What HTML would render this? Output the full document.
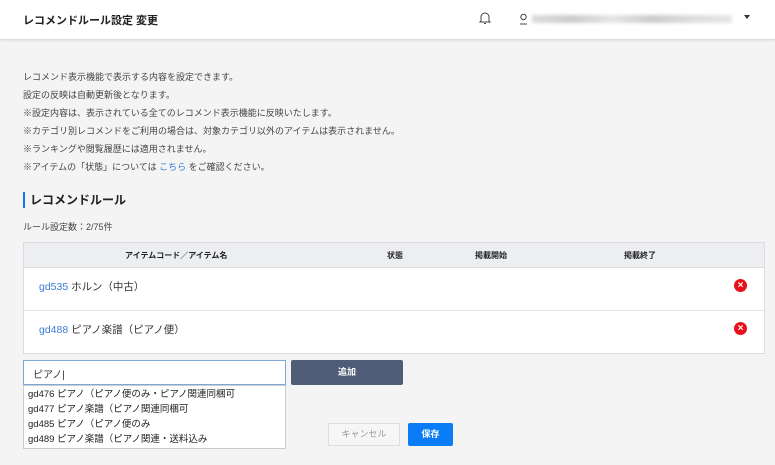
<!DOCTYPE html>
<html><head><meta charset="utf-8"><style>
*{margin:0;padding:0;box-sizing:border-box}
body{width:775px;height:465px;background:#f4f4f4;font-family:"Liberation Sans","Noto Sans CJK JP",sans-serif;color:#333;position:relative;overflow:hidden}
.hd{position:absolute;left:0;top:0;width:775px;height:40px;background:#fff;border-bottom:1px solid #ddd;box-shadow:0 1px 2px rgba(0,0,0,.08)}
.abs{position:absolute;white-space:nowrap}
.t{font-size:9px;color:#444}
.blur{position:absolute;left:532px;top:15px;width:200px;height:8px;background:linear-gradient(90deg,#ddd,#ccc 20%,#e6e6e6 40%,#ccc 60%,#ddd 80%,#e6e6e6);filter:blur(1.5px)}
.tbl{position:absolute;left:23px;top:242px;width:742px;height:112px;border:1px solid #ddd;background:#fff}
.th{height:25px;background:#eceef1;border-bottom:1px solid #ddd;position:relative;font-size:8px;font-weight:bold;color:#222}
.row{height:43px;border-bottom:1px solid #e3e3e3;position:relative;font-size:10.5px}
.row a{color:#3a7bd5}
.x{position:absolute;left:710px;top:11px;width:13px;height:13px;border-radius:50%;background:#e8101a;color:#fff;font-size:10px;font-weight:bold;text-align:center;line-height:13px}
</style></head><body>
<div class="hd">
<div class="abs" style="left:23px;top:12px;font-size:11px;font-weight:bold;color:#222">レコメンドルール設定 変更</div>
<svg class="abs" style="left:479px;top:11px" width="12" height="14" viewBox="0 0 12 14"><path d="M2 10V6a4 4 0 0 1 8 0v4l1 1H1z M5 12.5h2" fill="none" stroke="#444" stroke-width="1"/></svg>
<svg class="abs" style="left:519px;top:13px" width="9" height="12" viewBox="0 0 9 12"><circle cx="4.5" cy="4" r="2.7" fill="none" stroke="#444"/><path d="M1 11h7" stroke="#444"/></svg>
<div class="blur"></div>
<div class="abs" style="left:744px;top:15px;width:0;height:0;border-left:3.5px solid transparent;border-right:3.5px solid transparent;border-top:4px solid #333"></div>
</div>
<div class="abs t" style="left:23px;top:70px">レコメンド表示機能で表示する内容を設定できます。</div>
<div class="abs t" style="left:23px;top:88px">設定の反映は自動更新後となります。</div>
<div class="abs t" style="left:23px;top:106px">※設定内容は、表示されている全てのレコメンド表示機能に反映いたします。</div>
<div class="abs t" style="left:23px;top:124px">※カテゴリ別レコメンドをご利用の場合は、対象カテゴリ以外のアイテムは表示されません。</div>
<div class="abs t" style="left:23px;top:142px">※ランキングや閲覧履歴には適用されません。</div>
<div class="abs t" style="left:23px;top:160px">※アイテムの「状態」については <span style="color:#3a7bd5">こちら</span> をご確認ください。</div>
<div class="abs" style="left:23px;top:192px;width:2px;height:16px;background:#1a73e8"></div>
<div class="abs" style="left:30px;top:191px;font-size:12px;font-weight:bold;color:#222">レコメンドルール</div>
<div class="abs t" style="left:23px;top:220px">ルール設定数：2/75件</div>
<div class="tbl">
<div class="th"><span class="abs" style="left:101px;top:7px">アイテムコード／アイテム名</span><span class="abs" style="left:363px;top:7px">状態</span><span class="abs" style="left:451px;top:7px">掲載開始</span><span class="abs" style="left:600px;top:7px">掲載終了</span></div>
<div class="row"><span class="abs" style="left:15px;top:11px"><a>gd535</a> ホルン（中古）</span><div class="x">×</div></div>
<div class="row" style="border:none"><span class="abs" style="left:15px;top:11px"><a>gd488</a> ピアノ楽譜（ピアノ便）</span><div class="x">×</div></div>
</div>
<div class="abs" style="left:23px;top:360px;width:263px;height:25px;background:#fff;border:1px solid #7ea6d6;font-size:10px;padding:5px 9px">ピアノ|</div>
<div class="abs" style="left:291px;top:360px;width:112px;height:25px;background:#4f5d79;border-radius:2px;color:#fff;font-size:9px;font-weight:bold;text-align:center;line-height:25px">追加</div>
<div class="abs" style="left:23px;top:385px;width:263px;height:64px;background:#fff;border:1px solid #ccc;font-size:9.5px;color:#222;line-height:15px;padding:1px 4px">
gd476 ピアノ（ピアノ便のみ・ピアノ関連同梱可<br>gd477 ピアノ楽譜（ピアノ関連同梱可<br>gd485 ピアノ（ピアノ便のみ<br>gd489 ピアノ楽譜（ピアノ関連・送料込み</div>
<div class="abs" style="left:328px;top:423px;width:72px;height:23px;border:1px solid #ddd;background:#f6f6f6;color:#999;font-size:9px;text-align:center;line-height:21px">キャンセル</div>
<div class="abs" style="left:408px;top:423px;width:45px;height:23px;background:#0a7cf5;border-radius:2px;color:#fff;font-size:9px;font-weight:bold;text-align:center;line-height:23px">保存</div>
</body></html>
